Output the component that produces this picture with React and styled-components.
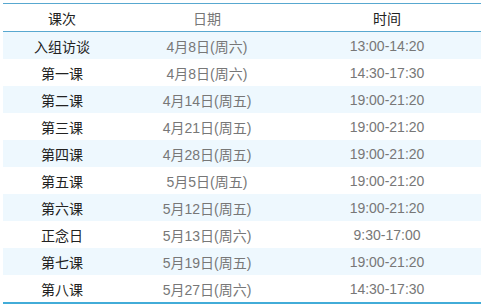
import React from "react";
import styled, { createGlobalStyle } from "styled-components";

const schedule = [
  { name: "入组访谈", date: "4月8日(周六)", time: "13:00-14:20" },
  { name: "第一课", date: "4月8日(周六)", time: "14:30-17:30" },
  { name: "第二课", date: "4月14日(周五)", time: "19:00-21:20" },
  { name: "第三课", date: "4月21日(周五)", time: "19:00-21:20" },
  { name: "第四课", date: "4月28日(周五)", time: "19:00-21:20" },
  { name: "第五课", date: "5月5日(周五)", time: "19:00-21:20" },
  { name: "第六课", date: "5月12日(周五)", time: "19:00-21:20" },
  { name: "正念日", date: "5月13日(周六)", time: "9:30-17:00" },
  { name: "第七课", date: "5月19日(周五)", time: "19:00-21:20" },
  { name: "第八课", date: "5月27日(周六)", time: "14:30-17:30" },
];

const GlobalStyle = createGlobalStyle`
  body {
    margin: 0;
    background: #fff;
    font-family: "Liberation Sans", "Noto Sans CJK SC", sans-serif;
  }
`;

function App() {
  return (
    <>
      <GlobalStyle />
      <Wrapper>
        <Table>
          <colgroup>
            <col style={{ width: 118 }} />
            <col style={{ width: 172 }} />
            <col style={{ width: 188 }} />
          </colgroup>
          <thead>
            <tr>
              <Th>课次</Th>
              <Th $muted>日期</Th>
              <Th>时间</Th>
            </tr>
          </thead>
          <tbody>
            {schedule.map((row, i) => (
              <Row key={row.name} $striped={i % 2 === 0}>
                <Td>{row.name}</Td>
                <Td $muted>{row.date}</Td>
                <Td $muted>{row.time}</Td>
              </Row>
            ))}
          </tbody>
        </Table>
      </Wrapper>
    </>
  );
}

const Wrapper = styled.div`
  padding: 3px 4px 0 3px;
`;

const Table = styled.table`
  width: 478px;
  border-collapse: separate;
  border-spacing: 0;
  table-layout: fixed;
  border-top: 1px solid #58a8d0;
  border-bottom: 2px solid #42acd8;
  font-size: 14px;
`;

const Th = styled.th`
  box-sizing: border-box;
  height: 28px;
  padding: 0;
  font-weight: normal;
  text-align: center;
  color: ${(p) => (p.$muted ? "#777" : "#222")};
  border-bottom: 1px solid #58a8d0;
`;

const Row = styled.tr`
  background: ${(p) => (p.$striped ? "#eef8fe" : "#fff")};
`;

const Td = styled.td`
  box-sizing: border-box;
  height: 27px;
  padding: 0;
  text-align: center;
  color: ${(p) => (p.$muted ? "#777" : "#222")};
`;

export default App;
